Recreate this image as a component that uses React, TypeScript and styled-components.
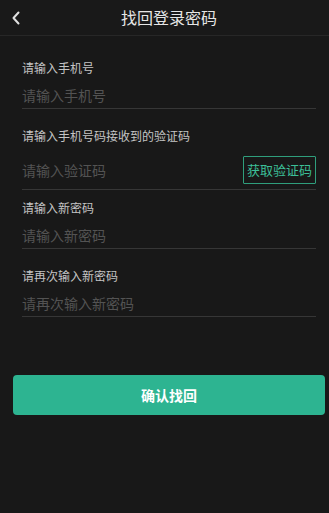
import React from "react";
import styled, { createGlobalStyle } from "styled-components";

const GlobalStyle = createGlobalStyle`
  html, body {
    margin: 0;
    padding: 0;
    background: #181818;
  }
  body {
    font-family: "Noto Sans CJK SC", "Noto Sans", sans-serif;
  }
  * { box-sizing: border-box; }
`;

const Page = styled.div`
  min-height: 513px;
  background: #181818;
  display: flex;
  flex-direction: column;
`;

const Header = styled.header`
  height: 36px;
  display: flex;
  align-items: center;
  border-bottom: 1px solid #272727;
  background: #191919;
`;

const BackButton = styled.button`
  width: 40px;
  height: 35px;
  padding: 0 0 0 11px;
  border: none;
  background: transparent;
  display: flex;
  align-items: center;
  cursor: pointer;
`;

const Title = styled.h1`
  flex: 1;
  margin: 0;
  text-align: center;
  font-size: 16px;
  font-weight: normal;
  color: #e6e6e6;
  line-height: 35px;
`;

const Spacer = styled.div`
  width: 31px;
`;

const Form = styled.form`
  padding: 0 13px 0 22px;
  display: flex;
  flex-direction: column;
`;

const Field = styled.div<{ $top: number }>`
  padding-top: ${(p) => p.$top}px;
  display: flex;
  flex-direction: column;
`;

const Label = styled.label`
  font-size: 12px;
  line-height: 16px;
  color: #c4c4c4;
`;

const Row = styled.div<{ $height: number }>`
  margin-top: 6px;
  height: ${(p) => p.$height}px;
  display: flex;
  align-items: center;
  border-bottom: 1px solid #363636;
`;

const Input = styled.input`
  flex: 1;
  min-width: 0;
  height: 100%;
  padding: 0;
  border: none;
  outline: none;
  background: transparent;
  font-family: inherit;
  font-size: 14px;
  color: #ddd;
  &::placeholder {
    color: #535353;
  }
`;

const CodeButton = styled.button`
  width: 73px;
  height: 28px;
  padding: 0;
  border: 1px solid #2f9e7c;
  border-radius: 1px;
  background: transparent;
  color: #3cbf97;
  font-family: inherit;
  font-size: 13px;
  cursor: pointer;
`;

const Submit = styled.button`
  margin: 58px 4px 0 13px;
  height: 40px;
  border: none;
  border-radius: 4px;
  background: #2db491;
  color: #ffffff;
  font-family: inherit;
  font-size: 14px;
  font-weight: bold;
  cursor: pointer;
`;

const ChevronLeft = () => (
  <svg width="10" height="14" viewBox="0 0 10 14" fill="none">
    <polyline
      points="7.5,1.5 2.5,7 7.5,12.5"
      stroke="#e0e0e0"
      strokeWidth="2"
      strokeLinecap="round"
      strokeLinejoin="round"
    />
  </svg>
);

export default function App() {
  return (
    <Page>
      <GlobalStyle />
      <Header>
        <BackButton type="button" aria-label="返回">
          <ChevronLeft />
        </BackButton>
        <Title>找回登录密码</Title>
        <Spacer />
      </Header>
      <Form onSubmit={(e) => e.preventDefault()}>
        <Field $top={24}>
          <Label>请输入手机号</Label>
          <Row $height={27}>
            <Input type="tel" placeholder="请输入手机号" />
          </Row>
        </Field>
        <Field $top={19}>
          <Label>请输入手机号码接收到的验证码</Label>
          <Row $height={40}>
            <Input type="text" placeholder="请输入验证码" />
            <CodeButton type="button">获取验证码</CodeButton>
          </Row>
        </Field>
        <Field $top={10}>
          <Label>请输入新密码</Label>
          <Row $height={27}>
            <Input type="password" placeholder="请输入新密码" />
          </Row>
        </Field>
        <Field $top={19}>
          <Label>请再次输入新密码</Label>
          <Row $height={27}>
            <Input type="password" placeholder="请再次输入新密码" />
          </Row>
        </Field>
      </Form>
      <Submit type="button">确认找回</Submit>
    </Page>
  );
}
